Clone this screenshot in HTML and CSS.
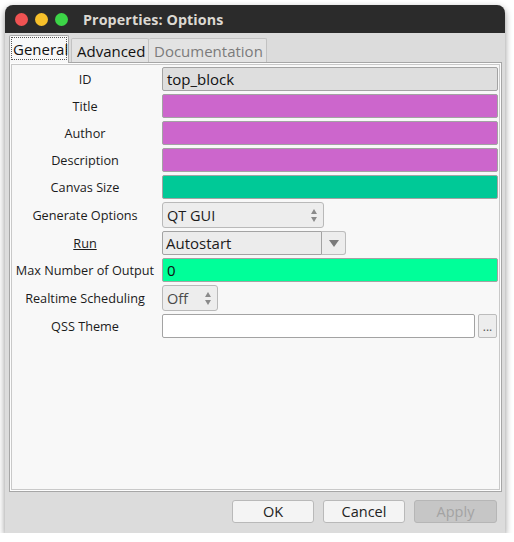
FILE: index.html
```html
<!DOCTYPE html>
<html>
<head>
<meta charset="utf-8">
<link rel="stylesheet" href="styles.css">
</head>
<body>
<div class="window">
  <div class="titlebar">
    <div class="lights">
      <span class="light red"></span>
      <span class="light yellow"></span>
      <span class="light green"></span>
    </div>
    <div class="title">Properties: Options</div>
  </div>
  <div class="body">
    <div class="tabs">
      <div class="tab active"><span class="focus">General</span></div>
      <div class="tab">Advanced</div>
      <div class="tab disabled">Documentation</div>
    </div>
    <div class="pane">
      <div class="form">
        <div class="row h24">
          <div class="label">ID</div>
          <div class="field readonly">top_block</div>
        </div>
        <div class="row h24">
          <div class="label">Title</div>
          <div class="field string"></div>
        </div>
        <div class="row h24">
          <div class="label">Author</div>
          <div class="field string"></div>
        </div>
        <div class="row h24">
          <div class="label">Description</div>
          <div class="field string"></div>
        </div>
        <div class="row h24">
          <div class="label">Canvas Size</div>
          <div class="field intvec"></div>
        </div>
        <div class="row h26">
          <div class="label">Generate Options</div>
          <div class="cell">
            <div class="combo gen">
              <span class="ctext">QT GUI</span>
              <span class="spin"><i class="up"></i><i class="down"></i></span>
            </div>
          </div>
        </div>
        <div class="row h24">
          <div class="label"><u>Run</u></div>
          <div class="cell">
            <div class="editcombo">
              <div class="edit">Autostart</div>
              <div class="drop"><i class="tri"></i></div>
            </div>
          </div>
        </div>
        <div class="row h24">
          <div class="label">Max Number of Output</div>
          <div class="field int">0</div>
        </div>
        <div class="row h26">
          <div class="label">Realtime Scheduling</div>
          <div class="cell">
            <div class="combo rt">
              <span class="ctext gray">Off</span>
              <span class="spin"><i class="up"></i><i class="down"></i></span>
            </div>
          </div>
        </div>
        <div class="row h24">
          <div class="label">QSS Theme</div>
          <div class="cell qss">
            <div class="field white"></div>
            <div class="dots">...</div>
          </div>
        </div>
      </div>
    </div>
    <div class="buttons">
      <div class="btn">OK</div>
      <div class="btn">Cancel</div>
      <div class="btn off">Apply</div>
    </div>
  </div>
</div>
</body>
</html>
```
FILE: styles.css
```css
html, body {
  margin: 0;
  padding: 0;
  background: #ffffff;
}
body {
  font-family: "Open Sans", "DejaVu Sans", sans-serif;
  color: #1b1b1b;
}
.window {
  margin: 5px 0 0 5px;
  width: 500px;
  height: 528px;
  background: #dcdcdc;
  border-radius: 8px 8px 0 0;
  box-shadow: 0 3px 7px rgba(0, 0, 0, 0.45);
  display: flex;
  flex-direction: column;
}
.titlebar {
  height: 28px;
  background: #2b2b2b;
  border-radius: 8px 8px 0 0;
  display: flex;
  align-items: center;
  padding-left: 10px;
}
.lights {
  display: flex;
  gap: 7px;
}
.light {
  width: 13px;
  height: 13px;
  border-radius: 50%;
  display: block;
}
.red { background: #ef5252; }
.yellow { background: #f7c02a; }
.green { background: #3cd447; }
.title {
  margin-left: 15px;
  color: #dcd9d2;
  font-weight: bold;
  font-size: 14.3px;
  letter-spacing: 0.1px;
}
.body {
  flex: 1;
  display: flex;
  flex-direction: column;
  padding: 2px 3px 10px 4px;
}
.tabs {
  display: flex;
  align-items: flex-end;
  height: 27px;
  font-size: 15px;
  position: relative;
  z-index: 1;
}
.tab {
  height: 24px;
  line-height: 24px;
  padding: 0 5px;
  background: #e3e3e3;
  border: 1px solid #c2c2c2;
  border-bottom: none;
  border-radius: 2px 2px 0 0;
  color: #111;
  box-sizing: border-box;
  margin-bottom: 0;
  white-space: nowrap;
}
.tab.active {
  height: 28px;
  background: #f8f8f8;
  border-color: #a8a8a8;
  padding: 1px 1px 0 1px;
  margin-bottom: -1px;
  margin-right: 2px;
  width: 60px;
}
.tab.active .focus {
  display: block;
  border: 1px dotted #555;
  height: 23px;
  line-height: 22px;
  padding: 0 1px 0 1px;
  box-sizing: border-box;
}
.tab.disabled {
  color: #7b7b7b;
  border-left: none;
  width: 118px;
}
.tab:nth-child(2) {
  width: 78px;
}
.pane {
  height: 430px;
  box-sizing: border-box;
  background: #f8f8f8;
  border: 1px solid #a6a6a6;
  box-shadow: inset 0 0 0 1px #fdfdfd, inset 0 0 0 2px #c9c9c9;
  padding: 4px 3px 0 2px;
}
.form {
  display: flex;
  flex-direction: column;
  gap: 3px;
}
.row {
  display: grid;
  grid-template-columns: 146px 1fr;
  column-gap: 4px;
  align-items: center;
}
.h24 { height: 24px; }
.h26 { height: 26px; }
.label {
  text-align: center;
  font-size: 12.7px;
  color: #1b1b1b;
}
.field {
  height: 24px;
  box-sizing: border-box;
  border: 1px solid #a3a3a3;
  border-radius: 2px;
  font-size: 15px;
  line-height: 22px;
  padding-left: 4px;
  color: #111;
}
.readonly { background: #dedede; }
.string { background: #cc66cc; }
.intvec { background: #00c997; }
.int { background: #00ff99; }
.white { background: #ffffff; flex: 1; }
.cell {
  display: flex;
  align-items: center;
  height: 100%;
}
.combo {
  height: 26px;
  box-sizing: border-box;
  background: #ededed;
  border: 1px solid #b9b9b9;
  border-radius: 3px;
  display: flex;
  align-items: center;
  justify-content: space-between;
  padding: 0 6px 0 4px;
  font-size: 14.5px;
}
.combo.gen { width: 162px; }
.combo.rt { width: 56px; }
.ctext { color: #1b1b1b; }
.ctext.gray { color: #4a4a4a; }
.spin {
  display: flex;
  flex-direction: column;
  gap: 3px;
  align-items: center;
}
.spin i {
  display: block;
  width: 0;
  height: 0;
  border-left: 3px solid transparent;
  border-right: 3px solid transparent;
}
.spin .up { border-bottom: 5px solid #8a8a8a; }
.spin .down { border-top: 5px solid #8a8a8a; }
.editcombo {
  width: 184px;
  height: 24px;
  display: flex;
}
.edit {
  width: 160px;
  box-sizing: border-box;
  background: #ececec;
  border: 1px solid #a3a3a3;
  border-radius: 2px 0 0 2px;
  font-size: 15px;
  line-height: 22px;
  padding-left: 3px;
}
.drop {
  flex: 1;
  box-sizing: border-box;
  background: #ededed;
  border: 1px solid #bcbcbc;
  border-left: none;
  border-radius: 0 3px 3px 0;
  display: flex;
  align-items: center;
  justify-content: center;
}
.tri {
  display: block;
  width: 0;
  height: 0;
  border-left: 5px solid transparent;
  border-right: 5px solid transparent;
  border-top: 7px solid #7a7a7a;
}
.qss {
  gap: 3px;
}
.qss .field { height: 24px; }
.dots {
  width: 19px;
  height: 24px;
  box-sizing: border-box;
  background: #ededed;
  border: 1px solid #bcbcbc;
  border-radius: 2px;
  font-size: 12px;
  color: #555;
  text-align: center;
  line-height: 24px;
  margin-right: 1px;
}
.buttons {
  display: flex;
  justify-content: flex-end;
  gap: 9px;
  margin-top: 8px;
  padding-right: 5px;
}
.btn {
  width: 82px;
  height: 23px;
  box-sizing: border-box;
  background: #f4f4f4;
  border: 1px solid #b9b9b9;
  border-radius: 3px;
  text-align: center;
  font-size: 14.5px;
  line-height: 21px;
  color: #222;
}
.btn.off {
  width: 83px;
  background: #c6c6c6;
  border-color: #b6b6b6;
  color: #a3a3a3;
}
```
